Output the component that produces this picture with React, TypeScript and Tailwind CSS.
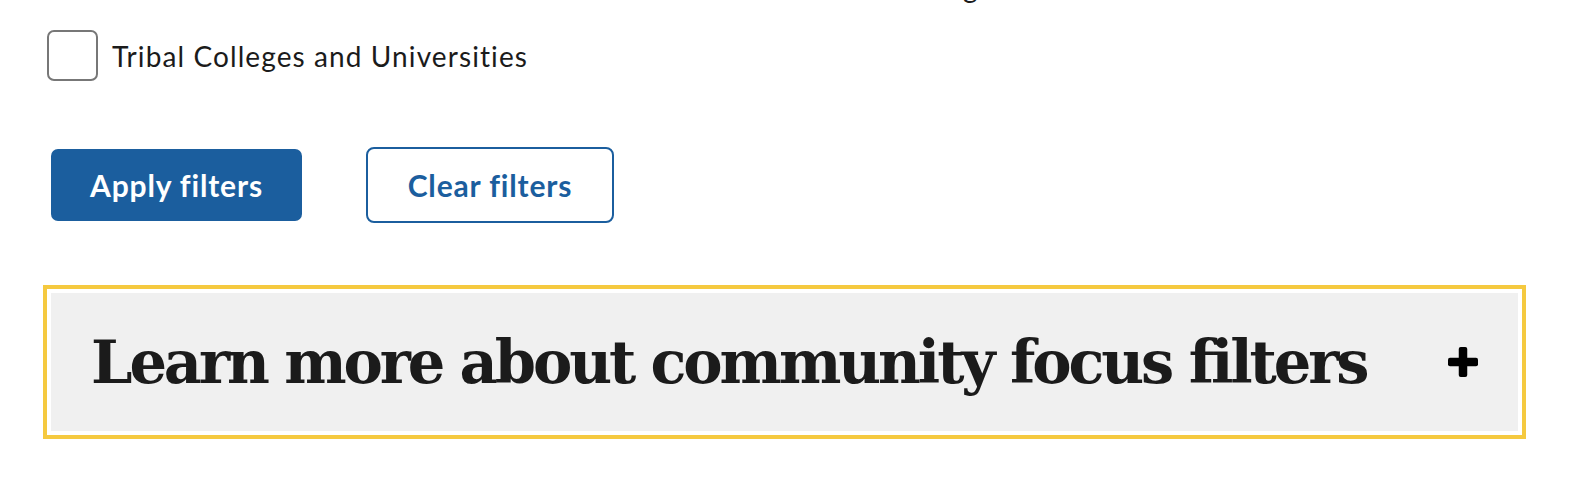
import React from "react";

function Checkbox() {
  return (
    <span className="block w-[51px] h-[51px] shrink-0 rounded-[7px] border-2 border-[#777777] bg-white" />
  );
}

export default function App() {
  return (
    <div className="w-full h-[478px] overflow-hidden bg-white text-[#1b1b1b] font-['Lato',sans-serif]">
      <div className="flex flex-col">
        <label className="-mt-[67px] ml-[47px] flex items-start gap-[14px]">
          <Checkbox />
          <span className="text-[28px] leading-[36px] tracking-[1.1px]">
            Alaska Native-Serving and Native Hawaiian-Serving Institutions
            <br />
            Asian American and Native American and Pacific Islander-Serving Institutions
          </span>
        </label>
        <label className="mt-[25px] ml-[47px] flex h-[51px] items-center gap-[14px]">
          <Checkbox />
          <span className="text-[28px] leading-none tracking-[1.1px]">Tribal Colleges and Universities</span>
        </label>
      </div>

      <div className="mt-[66px] ml-[51px] flex items-center gap-[64px]">
        <button className="flex h-[72px] w-[251px] items-center justify-center rounded-[7px] bg-[#1b5e9e] text-[30px] font-bold tracking-[0.85px] text-white">
          Apply filters
        </button>
        <button className="flex h-[76px] w-[248px] items-center justify-center rounded-[8px] border-2 border-[#1b5e9e] bg-white text-[30px] font-bold tracking-[0.85px] text-[#1b5e9e]">
          Clear filters
        </button>
      </div>

      <div className="mt-[70px] ml-[51px] w-[1467px]">
        <button className="flex h-[138px] w-full items-center justify-between bg-[#f0f0f0] pl-[40px] pr-[40px] outline-4 outline-solid outline-offset-4 outline-[#f5c93f]">
          <span className="font-['DejaVu_Serif',serif] text-[59px] font-bold leading-none tracking-[-3.1px] text-[#1b1b1b]">
            Learn more about community focus filters
          </span>
          <svg width="30" height="30" viewBox="0 0 30 30" aria-hidden="true">
            <rect x="0" y="10.75" width="30" height="8.5" rx="2" fill="#000" />
            <rect x="10.75" y="0" width="8.5" height="30" rx="2" fill="#000" />
          </svg>
        </button>
      </div>
    </div>
  );
}
